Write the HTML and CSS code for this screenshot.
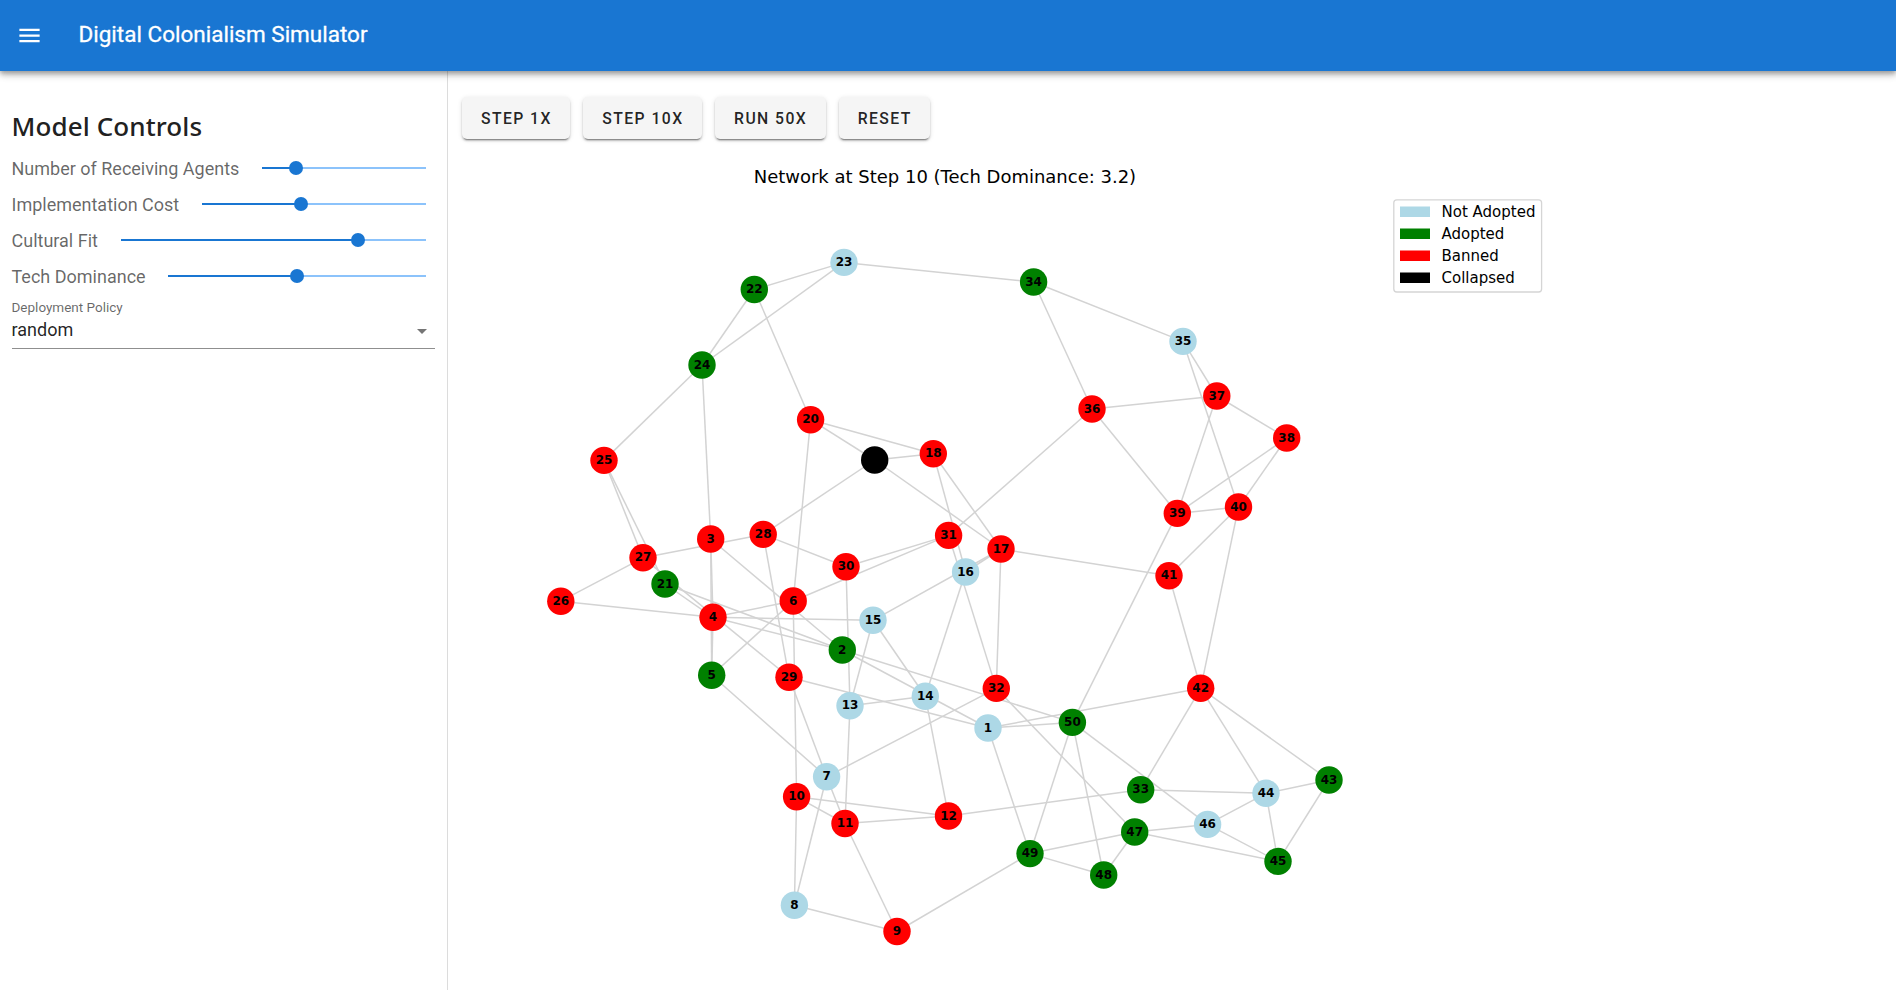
FILE: index.html
```html
<!DOCTYPE html>
<html lang="en">
<head>
<meta charset="utf-8">
<title>Digital Colonialism Simulator</title>
<link rel="stylesheet" href="styles.css">
</head>
<body>
<header class="app-bar">
  <svg class="menu-icon" viewBox="0 0 24 24"><path d="M3 18h18v-2H3v2zm0-5h18v-2H3v2zm0-7v2h18V6H3z"/></svg>
  <div class="app-title">Digital Colonialism Simulator</div>
</header>
<div class="layout">
  <aside class="sidebar">
    <h2 class="heading">Model Controls</h2>
    <div class="control"><label class="label">Number of Receiving Agents</label><div class="track"><div class="fill" style="width:20.7%"></div></div></div>
    <div class="control"><label class="label">Implementation Cost</label><div class="track"><div class="fill" style="width:44.1%"></div></div></div>
    <div class="control"><label class="label">Cultural Fit</label><div class="track"><div class="fill" style="width:77.6%"></div></div></div>
    <div class="control"><label class="label">Tech Dominance</label><div class="track"><div class="fill" style="width:50%"></div></div></div>
    <div class="select">
      <div class="select-label">Deployment Policy</div>
      <div class="select-row"><span>random</span><span class="arrow"></span></div>
    </div>
  </aside>
  <main class="main">
    <div class="buttons">
      <button class="btn">STEP 1X</button>
      <button class="btn">STEP 10X</button>
      <button class="btn">RUN 50X</button>
      <button class="btn">RESET</button>
    </div>
    <svg class="chart" id="chart" width="1448" height="840" viewBox="448 150 1448 840">
      <text class="chart-title" x="944.9" y="183" textLength="382.4">Network at Step 10 (Tech Dominance: 3.2)</text>
      <g id="edges"></g>
      <g id="nodes"></g>
      <rect class="legend-box" x="1393.8" y="199.8" width="147.8" height="92.2" rx="3"/>
      <rect class="idle" x="1400" y="206.5" width="30" height="10.5"/>
      <rect class="adopted" x="1400" y="228.5" width="30" height="10.5"/>
      <rect class="banned" x="1400" y="250.5" width="30" height="10.5"/>
      <rect class="collapsed" x="1400" y="272.5" width="30" height="10.5"/>
      <g class="legend-text">
        <text x="1441.5" y="217">Not Adopted</text>
        <text x="1441.5" y="239">Adopted</text>
        <text x="1441.5" y="261">Banned</text>
        <text x="1441.5" y="283">Collapsed</text>
      </g>
    </svg>
  </main>
</div>
<script src="graph.js"></script>
</body>
</html>
```
FILE: styles.css
```css
* { box-sizing: border-box; }
body {
  margin: 0;
  height: 990px;
  overflow: hidden;
  background: #fff;
  font-family: Roboto, sans-serif;
  color: rgba(0, 0, 0, 0.87);
}
.app-bar {
  position: relative;
  z-index: 1;
  display: flex;
  align-items: center;
  height: 71px;
  padding-left: 16px;
  background: #1976d2;
  color: #fff;
  box-shadow: 0 2px 5px rgba(0, 0, 0, 0.3), 0 5px 6px rgba(0, 0, 0, 0.12), 0 1px 12px rgba(0, 0, 0, 0.1);
}
.menu-icon { width: 27px; height: 27px; fill: #fff; }
.app-title { margin: 0 0 4px 35.5px; font-size: 22.5px; line-height: 36px; -webkit-text-stroke: 0.3px #fff; }
.layout { display: flex; height: 919px; }
.sidebar {
  width: 448px;
  padding: 33px 12px 0 11.5px;
  border-right: 1px solid #dcdcdc;
}
.heading {
  margin: 0 0 2px;
  font: 500 26px/44px "Noto Sans", sans-serif;
  letter-spacing: 0.1px;
  color: #212121;
}
.control { display: flex; align-items: center; height: 36px; padding-right: 9px; }
.label { font-size: 18px; color: rgba(0, 0, 0, 0.6); margin-right: 22.6px; white-space: nowrap; }
.track { flex: 1; height: 2px; background: #8cc3fb; }
.fill { position: relative; height: 2px; background: #1976d2; }
.fill::after {
  content: "";
  position: absolute;
  right: -7px;
  top: -6px;
  width: 14px;
  height: 14px;
  border-radius: 50%;
  background: #1976d2;
}
.select { border-bottom: 1px solid #8f8f8f; height: 55px; padding-top: 4px; }
.select-label { font-size: 13.5px; line-height: 18px; color: rgba(0, 0, 0, 0.6); }
.select-row { display: flex; justify-content: space-between; align-items: center; font-size: 18px; line-height: 28px; padding-right: 8px; }
.arrow { border: 5.6px solid transparent; border-top-color: #757575; border-bottom: 0; margin-top: 3px; }
.main { flex: 1; }
.buttons { display: flex; gap: 13px; height: 79px; padding: 26.4px 0 0 14px; }
.btn {
  height: 41.6px;
  padding: 0 18.6px 0 19px;
  border: 0;
  border-radius: 5px;
  background: #f5f5f5;
  color: rgba(0, 0, 0, 0.87);
  font: 500 15.75px Roboto, sans-serif;
  letter-spacing: 1.41px;
  box-shadow: 0 3px 1px -2px rgba(0, 0, 0, 0.3), 0 2px 2px rgba(0, 0, 0, 0.2), 0 1px 5px rgba(0, 0, 0, 0.12);
}
.chart { display: block; font-family: "DejaVu Sans", sans-serif; }
.chart-title { font-size: 18px; text-anchor: middle; }
#edges { stroke: #d3d3d3; stroke-width: 1.5; }
#nodes { font-size: 12px; font-weight: bold; text-anchor: middle; }
#nodes text { fill: #000; }
.legend-box { fill: #fff; stroke: #d5d5d5; stroke-width: 1.3; }
.legend-text { font-size: 15px; }
.idle { fill: #add8e6; }
.adopted { fill: #008000; }
.banned { fill: #f00; }
.collapsed { fill: #000; }
```
FILE: graph.js
```javascript
const nodes = {
  1: [988, 728, "idle"], 2: [842.3, 650, "adopted"], 3: [710.7, 539, "banned"],
  4: [713, 617.3, "banned"], 5: [711.7, 675.3, "adopted"], 6: [793.2, 601, "banned"],
  7: [826.6, 776.8, "idle"], 8: [794.4, 905.3, "idle"], 9: [897, 931.5, "banned"],
  10: [796.6, 796.8, "banned"], 11: [845, 823.5, "banned"], 12: [948.5, 816, "banned"],
  13: [850, 705.8, "idle"], 14: [925.3, 696.3, "idle"], 15: [873, 620.3, "idle"],
  16: [965.6, 572, "idle"], 17: [1001, 549, "banned"], 18: [933.3, 453.7, "banned"],
  19: [874.7, 460, "collapsed"], 20: [810.6, 419.7, "banned"], 21: [665, 584, "adopted"],
  22: [754.3, 289.5, "adopted"], 23: [844, 262.4, "idle"], 24: [702, 365, "adopted"],
  25: [604, 460.4, "banned"], 26: [560.8, 601.2, "banned"], 27: [643, 557.8, "banned"],
  28: [763.2, 534.4, "banned"], 29: [789, 677.2, "banned"], 30: [846, 566.7, "banned"],
  31: [948.6, 535.4, "banned"], 32: [996.3, 688.4, "banned"], 33: [1140.7, 789.7, "adopted"],
  34: [1033.6, 282, "adopted"], 35: [1183, 341.4, "idle"], 36: [1092, 409, "banned"],
  37: [1216.8, 396, "banned"], 38: [1286.7, 438, "banned"], 39: [1177.3, 513.4, "banned"],
  40: [1238.5, 507, "banned"], 41: [1169, 575.8, "banned"], 42: [1200.7, 688.3, "banned"],
  43: [1329, 780, "adopted"], 44: [1266, 793.3, "idle"], 45: [1278, 861.4, "adopted"],
  46: [1207.6, 824.4, "idle"], 47: [1134.7, 832, "adopted"], 48: [1103.7, 875, "adopted"],
  49: [1030, 853.6, "adopted"], 50: [1072.4, 722.4, "adopted"]
};

const edges = `22-23 22-24 23-24 20-22 23-34 34-35 34-36 24-25 3-24 3-4 3-5 4-5
25-27 21-25 26-27 4-26 27-28 27-29 4-21 2-21 4-6 4-15 2-4 5-6 2-3 6-20 6-31 6-10
8-10 28-30 19-28 28-29 30-31 13-30 1-29 7-29 7-11 5-7 7-32 7-8 10-11 10-12 11-12
9-11 11-13 8-9 9-49 12-14 12-33 13-14 13-15 14-15 14-16 1-2 2-50 1-50 1-42
1-49 15-17 16-17 16-18 31-32 19-20 18-19 17-19 18-20 17-18 17-32 17-41 31-36
36-37 36-39 35-37 35-40 37-38 37-39 38-39 38-40 39-40 39-50 40-41 40-42 41-42
33-42 42-44 42-43 43-44 43-45 44-45 44-46 33-44 45-46 45-47 46-47 46-50 47-48
47-49 32-47 48-49 48-50 49-50`.split(/\s+/);

function add(parent, tag, attrs) {
  const el = document.createElementNS("http://www.w3.org/2000/svg", tag);
  for (const key in attrs) el.setAttribute(key, attrs[key]);
  parent.appendChild(el);
  return el;
}

const edgeLayer = document.getElementById("edges");
for (const edge of edges) {
  const [a, b] = edge.split("-").map(id => nodes[id]);
  add(edgeLayer, "line", { x1: a[0], y1: a[1], x2: b[0], y2: b[1] });
}

const nodeLayer = document.getElementById("nodes");
for (const id in nodes) {
  const [x, y, state] = nodes[id];
  add(nodeLayer, "circle", { cx: x, cy: y, r: 13.7, class: state });
  if (state !== "collapsed") add(nodeLayer, "text", { x: x, y: y + 3.5 }).textContent = id;
}
```
